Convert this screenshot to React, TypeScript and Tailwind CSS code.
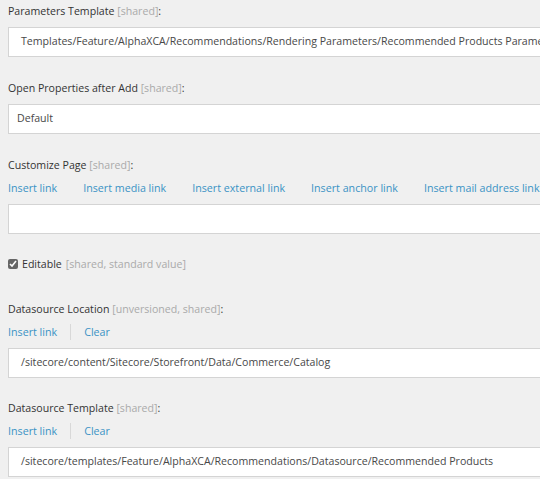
import React from "react"

const font = { fontFamily: '"Open Sans", "Segoe UI", sans-serif' }

function Label({ name, meta }: { name: string; meta: string }) {
  return (
    <div className="h-4 text-[10.6px] leading-4 text-[#333]">
      {name} <span className="text-[#aaa]">[{meta}]</span>:
    </div>
  )
}

function Links({ items }: { items: string[] }) {
  return (
    <div className="mt-[7px] flex h-4 items-center text-[10.7px] leading-4 text-[#3b93c5] whitespace-nowrap">
      {items.map((item, i) => (
        <React.Fragment key={item}>
          {i > 0 && <span className="mx-[13px] h-4 w-px bg-[#d8d8d8]" />}
          <a className="cursor-pointer">{item}</a>
        </React.Fragment>
      ))}
    </div>
  )
}

function Field({ value, pad = "pl-3" }: { value: string; pad?: string }) {
  return (
    <div
      className={`mt-2 flex h-[30px] w-[600px] items-center border border-[#d4d4d4] bg-white ${pad} text-[10.6px] text-[#484848] whitespace-nowrap overflow-hidden`}
    >
      {value}
    </div>
  )
}

export default function App() {
  return (
    <div className="h-[479px] w-[540px] overflow-hidden bg-[#f0f0f0]" style={font}>
      <div className="px-2 pt-[3px]">
        <div className="mb-[23px]">
          <Label name="Parameters Template" meta="shared" />
          <Field value="Templates/Feature/AlphaXCA/Recommendations/Rendering Parameters/Recommended Products Parameters" />
        </div>

        <div className="mb-[23px]">
          <Label name="Open Properties after Add" meta="shared" />
          <Field value="Default" pad="pl-2" />
        </div>

        <div>
          <Label name="Customize Page" meta="shared" />
          <Links
            items={[
              "Insert link",
              "Insert media link",
              "Insert external link",
              "Insert anchor link",
              "Insert mail address link",
            ]}
          />
          <Field value="" />
        </div>

        <div className="mt-[22px] flex h-4 items-center text-[10.6px] leading-4">
          <input
            type="checkbox"
            defaultChecked
            className="mr-1 h-[10px] w-[10px] accent-[#666]"
          />
          <span className="text-[#333]">Editable</span>
          <span className="ml-1 text-[#aaa]">[shared, standard value]</span>
        </div>

        <div className="mt-[29px] mb-[22px]">
          <Label name="Datasource Location" meta="unversioned, shared" />
          <Links items={["Insert link", "Clear"]} />
          <Field value="/sitecore/content/Sitecore/Storefront/Data/Commerce/Catalog" />
        </div>

        <div>
          <Label name="Datasource Template" meta="shared" />
          <Links items={["Insert link", "Clear"]} />
          <Field value="/sitecore/templates/Feature/AlphaXCA/Recommendations/Datasource/Recommended Products" />
        </div>
      </div>
    </div>
  )
}
